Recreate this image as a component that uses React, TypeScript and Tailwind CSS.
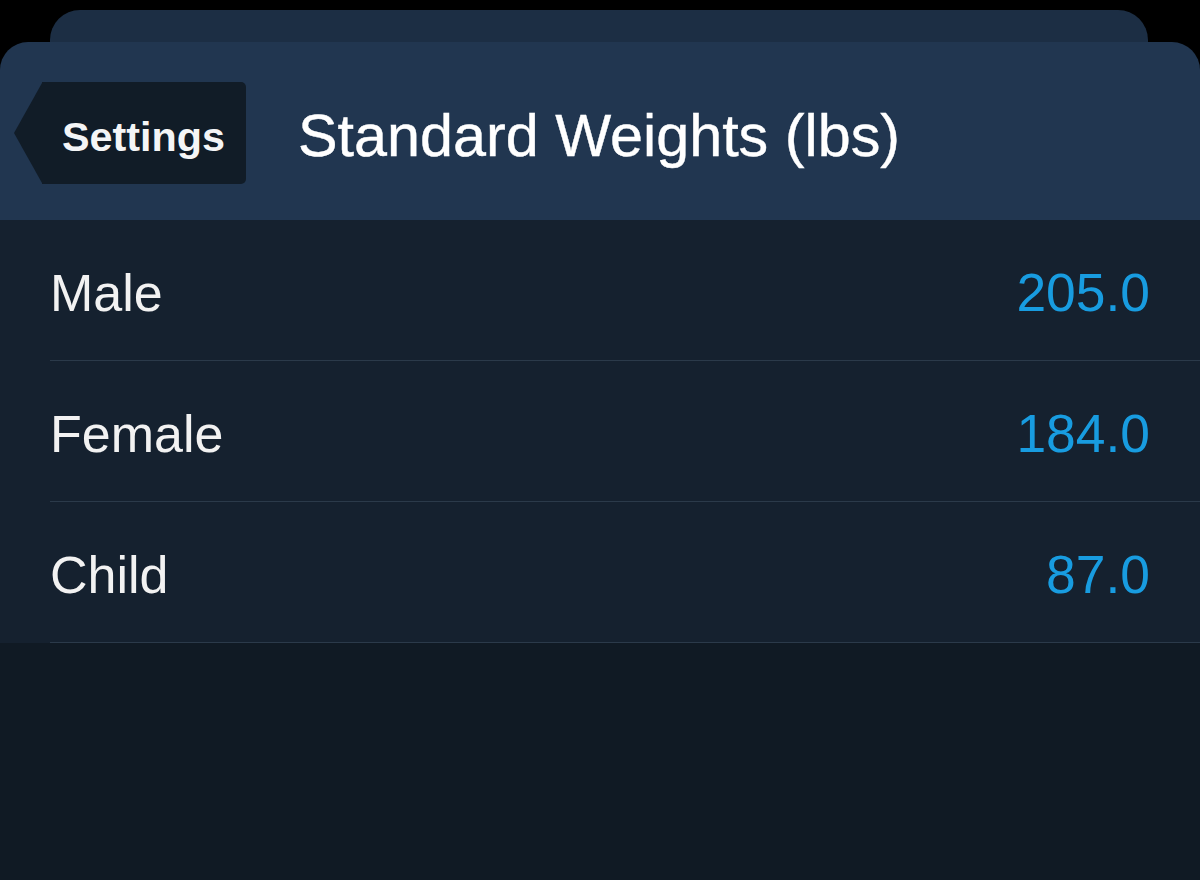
const rows = [
  { label: "Male", value: "205.0" },
  { label: "Female", value: "184.0" },
  { label: "Child", value: "87.0" },
];

export default function App() {
  return (
    <div className="flex h-[880px] w-[1200px] flex-col overflow-hidden bg-black font-['Liberation_Sans',Arial,sans-serif]">
      {/* card stacked behind */}
      <div className="ml-[50px] mr-[52px] mt-[10px] h-[32px] shrink-0 rounded-t-[30px] bg-[#1c2e44]" />

      {/* nav header */}
      <div className="flex h-[178px] shrink-0 items-start rounded-t-[28px] bg-[#213650] pl-[14px] pt-[40px]">
        <div className="flex h-[102px] items-stretch">
          <svg width="28" height="102" viewBox="0 0 28 102" className="block">
            <polygon points="28.5,0 0,51 28.5,102" fill="#111c27" />
          </svg>
          <div className="flex w-[204px] items-center rounded-r-[5px] bg-[#111c27] pl-[20px] pt-[10px]">
            <span className="text-[41.3px] font-bold leading-none text-[#f4f5f6]">Settings</span>
          </div>
        </div>
        <div className="ml-[52px] flex h-[102px] items-center pt-[6px]">
          <h1 className="text-[59.3px] leading-none text-white [-webkit-text-stroke:0.4px_white]">
            Standard Weights (lbs)
          </h1>
        </div>
      </div>

      {/* list */}
      <div className="shrink-0 bg-[#15212f]">
        {rows.map((r) => (
          <div
            key={r.label}
            className="ml-[50px] flex h-[141px] items-center justify-between border-b border-[#2b3a4a] pr-[50px] pt-[6px]"
          >
            <span className="text-[52px] leading-none text-[#f2f2f2]">{r.label}</span>
            <span className="text-[53.4px] leading-none text-[#189ce0]">{r.value}</span>
          </div>
        ))}
      </div>

      <div className="flex-1 bg-[#101a24]" />
    </div>
  );
}
